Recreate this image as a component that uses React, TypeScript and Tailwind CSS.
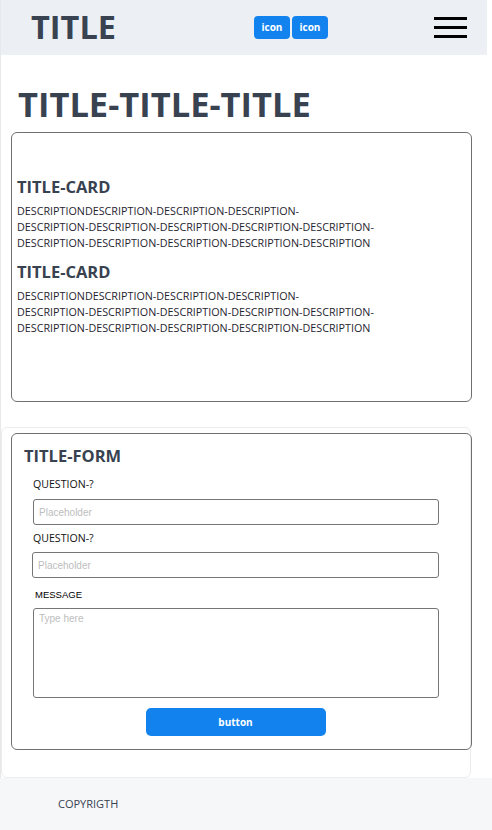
const DESC_LINES = [
  "DESCRIPTIONDESCRIPTION-DESCRIPTION-DESCRIPTION-",
  "DESCRIPTION-DESCRIPTION-DESCRIPTION-DESCRIPTION-DESCRIPTION-",
  "DESCRIPTION-DESCRIPTION-DESCRIPTION-DESCRIPTION-DESCRIPTION",
]

function CardItem({ className = "" }: { className?: string }) {
  return (
    <div className={className}>
      <h3 className="text-[16.5px] leading-[22px] font-bold text-[#384250]">TITLE-CARD</h3>
      <p className="mt-[5px] text-[10.75px] leading-4 text-[#1f2430]">
        {DESC_LINES.map((l) => (
          <span key={l} className="block">
            {l}
          </span>
        ))}
      </p>
    </div>
  )
}

export default function App() {
  return (
    <div className="min-h-screen flex flex-col bg-white font-['Open_Sans',sans-serif]">
      <div className="border-l border-[#e6e8eb] flex flex-col">
        {/* header */}
        <header className="h-[55px] mr-[5px] bg-[#eceff4] flex items-center">
          <span className="ml-[30px] text-[32.5px] leading-none font-bold text-[#384250]">TITLE</span>
          <div className="ml-[138px] flex gap-[2px]">
            <button className="w-[36px] h-[23px] rounded-[4px] bg-[#1283ee] text-white text-[10px] font-bold">
              icon
            </button>
            <button className="w-[36px] h-[23px] rounded-[4px] bg-[#1283ee] text-white text-[10px] font-bold">
              icon
            </button>
          </div>
          <div className="ml-auto mr-[20px] flex flex-col gap-[6px] w-[33px]">
            <span className="h-[3px] bg-black" />
            <span className="h-[3px] bg-black" />
            <span className="h-[3px] bg-black" />
          </div>
        </header>

        <h1 className="mt-[31px] ml-[17px] text-[34.5px] leading-9 font-bold text-[#384250]">
          TITLE-TITLE-TITLE
        </h1>

        {/* cards */}
        <section className="mt-[10px] ml-[10px] w-[461px] h-[270px] border border-[#707070] rounded-md pt-[43px] pl-[5px]">
          <CardItem />
          <CardItem className="mt-[10px]" />
        </section>

        {/* form */}
        <section className="mt-[25px] w-[470px] border border-[#ececec] rounded-md pt-[5px] pb-[27px]">
          <div className="ml-[9px] w-[461px] border border-[#707070] rounded-md pt-[11px] pl-[12px] pb-[13px]">
            <h3 className="text-[16.5px] leading-[22px] font-bold text-[#384250]">TITLE-FORM</h3>
            <div className="w-[407px] ml-[8px] mt-[9px] flex flex-col">
              <label className="ml-[1px] text-[10.6px] leading-4 text-[#111]">QUESTION-?</label>
              <input
                placeholder="Placeholder"
                className="mt-[7px] ml-[1px] h-[26px] border border-[#767676] rounded-[3px] px-[5px] text-[10px] font-['Liberation_Sans',sans-serif] placeholder:text-[#bdbdbd] outline-none"
              />
              <label className="mt-[5px] ml-[1px] text-[10.6px] leading-4 text-[#111]">QUESTION-?</label>
              <input
                placeholder="Placeholder"
                className="mt-[6px] h-[26px] border border-[#767676] rounded-[3px] px-[5px] text-[10px] font-['Liberation_Sans',sans-serif] placeholder:text-[#bdbdbd] outline-none"
              />
              <label className="mt-[9px] ml-[3px] text-[9.5px] leading-4 text-black font-['Liberation_Sans',sans-serif]">
                MESSAGE
              </label>
              <textarea
                placeholder="Type here"
                className="mt-[5px] ml-[1px] h-[90px] resize-none border border-[#767676] rounded-[3px] px-[5px] py-[2px] text-[10px] font-['Liberation_Sans',sans-serif] placeholder:text-[#bdbdbd] outline-none"
              />
              <button className="mt-[10px] self-center w-[180px] h-[28px] rounded-[5px] bg-[#1283ee] text-white text-[10px] font-bold">
                button
              </button>
            </div>
          </div>
        </section>
      </div>

      <footer className="flex-1 bg-[#f6f7f9] pt-[12px] pl-[58px]">
        <span className="text-[11px] leading-4 text-[#384250]">COPYRIGTH</span>
      </footer>
    </div>
  )
}
